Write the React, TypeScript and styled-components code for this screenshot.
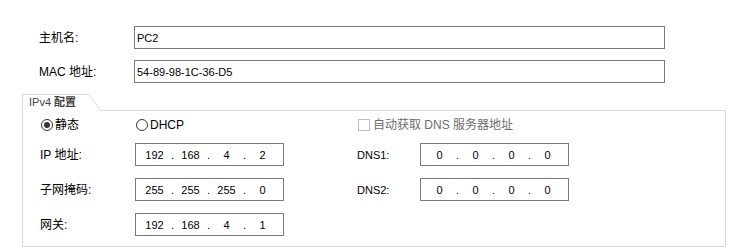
import React from "react";
import styled, { createGlobalStyle } from "styled-components";

const Global = createGlobalStyle`
  html, body { margin: 0; padding: 0; background: #fff; }
  body { font-family: "Liberation Sans", "Noto Sans CJK SC", sans-serif; color: #000; }
`;

const Page = styled.div`
  width: 732px;
  height: 251px;
  box-sizing: border-box;
  padding-top: 26px;
  display: flex;
  flex-direction: column;
`;

const TopForm = styled.div`
  display: flex;
  flex-direction: column;
  gap: 11px;
  padding-left: 39px;
`;

const Row = styled.div`
  display: flex;
  align-items: center;
  height: 23px;
`;

const Label = styled.div<{ $w: number; $small?: boolean }>`
  width: ${(p) => p.$w}px;
  font-size: ${(p) => (p.$small ? 11 : 12)}px;
  line-height: 14px;
  flex: none;
  white-space: nowrap;
`;

const TextInput = styled.div`
  box-sizing: border-box;
  width: 531px;
  height: 23px;
  border: 1px solid #7a7a7a;
  padding-left: 2px;
  font-size: 11px;
  display: flex;
  align-items: center;
`;

const Group = styled.div`
  margin-top: 11px;
  margin-left: 22px;
  width: 704px;
  display: flex;
  flex-direction: column;
`;

const GroupHeader = styled.div`
  display: flex;
  height: 17px;
`;

const Tab = styled.div`
  box-sizing: border-box;
  width: 67px;
  height: 17px;
  border-left: 1px solid #d9d9d9;
  border-top: 1px solid #d9d9d9;
  padding-left: 6px;
  font-size: 11px;
  line-height: 15px;
  color: #444;
  white-space: nowrap;
`;

const TabSlant = styled.svg`
  flex: none;
  display: block;
`;

const HeaderLine = styled.div`
  flex: 1;
  border-bottom: 1px solid #d9d9d9;
`;

const GroupBody = styled.div`
  box-sizing: border-box;
  height: 136px;
  border: 1px solid #d9d9d9;
  border-top: none;
  padding: 8px 0 0 17px;
  display: grid;
  grid-template-columns: 95px 149px 73px 63px 149px;
  grid-template-rows: 12px 23px 23px 23px;
  row-gap: 12px;
  align-items: center;
`;

const RadioRow = styled.div`
  display: flex;
  align-items: center;
  gap: 2px;
  font-size: 12px;
  line-height: 12px;
  white-space: nowrap;
`;

const RadioCircle = styled.span<{ $on?: boolean }>`
  box-sizing: border-box;
  width: 12px;
  height: 12px;
  border-radius: 50%;
  border: 1px solid #333;
  display: inline-flex;
  align-items: center;
  justify-content: center;
  margin-left: 1px;
  &::after {
    content: "";
    width: 6px;
    height: 6px;
    border-radius: 50%;
    background: ${(p) => (p.$on ? "#333" : "transparent")};
  }
`;

const CheckRow = styled.div`
  grid-column: 4 / span 2;
  display: flex;
  align-items: center;
  gap: 3px;
  font-size: 12px;
  line-height: 12px;
  color: #6d6d6d;
  white-space: nowrap;
  margin-left: 1px;
`;

const CheckBox = styled.span`
  box-sizing: border-box;
  width: 12px;
  height: 12px;
  border: 1px solid #bcbcbc;
  background: #fff;
`;

const IpBox = styled.div`
  box-sizing: border-box;
  width: 149px;
  height: 23px;
  border: 1px solid #7a7a7a;
  padding-left: 5px;
  display: flex;
  align-items: center;
  font-size: 11px;
`;

const Seg = styled.span`
  width: 27px;
  text-align: center;
`;

const Dot = styled.span`
  width: 9px;
  text-align: center;
`;

const IpField = ({ v }: { v: string }) => {
  const parts = v.split(".");
  return (
    <IpBox>
      {parts.map((p, i) => (
        <React.Fragment key={i}>
          {i > 0 && <Dot>.</Dot>}
          <Seg>{p}</Seg>
        </React.Fragment>
      ))}
    </IpBox>
  );
};

const Empty = styled.div``;

export default function App() {
  return (
    <Page>
      <Global />
      <TopForm>
        <Row>
          <Label $w={95}>主机名:</Label>
          <TextInput>PC2</TextInput>
        </Row>
        <Row>
          <Label $w={95}>MAC 地址:</Label>
          <TextInput>54-89-98-1C-36-D5</TextInput>
        </Row>
      </TopForm>
      <Group>
        <GroupHeader>
          <Tab>
            IPv4 <b>配置</b>
          </Tab>
          <TabSlant width="12" height="17" viewBox="0 0 12 17">
            <line x1="0" y1="0.5" x2="1" y2="0.5" stroke="#d9d9d9" />
            <line x1="0.5" y1="0.5" x2="11.5" y2="16.5" stroke="#d9d9d9" />
          </TabSlant>
          <HeaderLine />
        </GroupHeader>
        <GroupBody>
          <RadioRow>
            <RadioCircle $on />
            静态
          </RadioRow>
          <RadioRow>
            <RadioCircle />
            DHCP
          </RadioRow>
          <Empty />
          <CheckRow>
            <CheckBox />
            自动获取 DNS 服务器地址
          </CheckRow>

          <Label $w={95}>IP 地址:</Label>
          <IpField v="192.168.4.2" />
          <Empty />
          <Label $w={63} $small>DNS1:</Label>
          <IpField v="0.0.0.0" />

          <Label $w={95}>子网掩码:</Label>
          <IpField v="255.255.255.0" />
          <Empty />
          <Label $w={63} $small>DNS2:</Label>
          <IpField v="0.0.0.0" />

          <Label $w={95}>网关:</Label>
          <IpField v="192.168.4.1" />
        </GroupBody>
      </Group>
    </Page>
  );
}
